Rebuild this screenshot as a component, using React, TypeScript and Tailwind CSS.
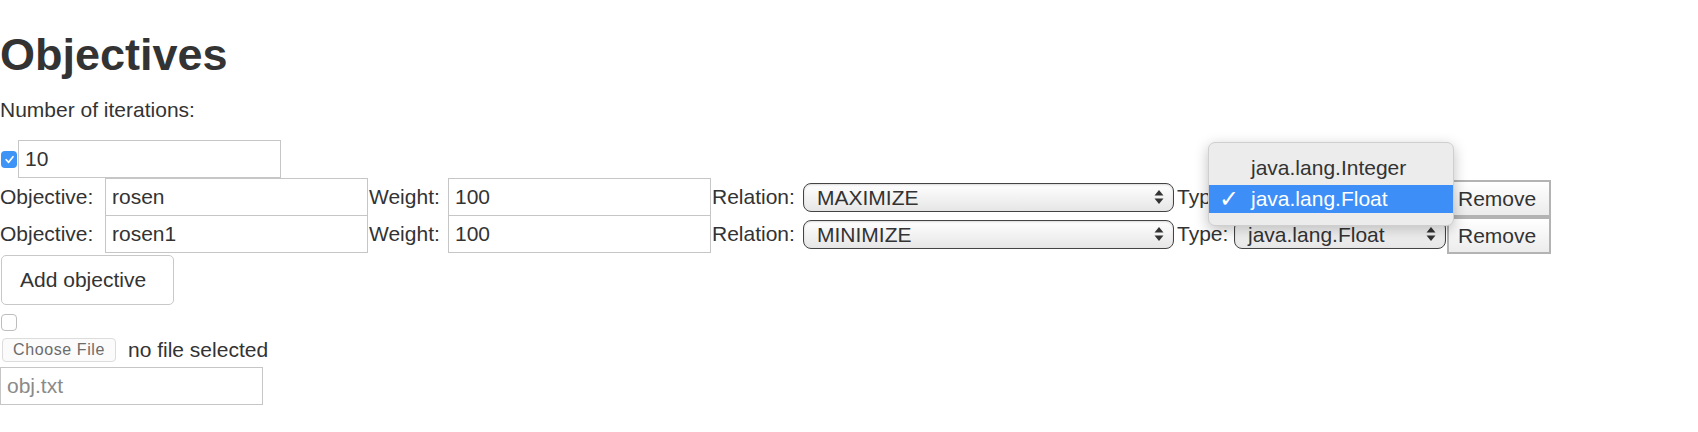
import React from 'react';

function Arrows() {
    return (
        <svg width="10" height="16" viewBox="0 0 10 16" className="shrink-0">
            <polygon points="5,1 9.5,6.5 0.5,6.5" fill="#333" />
            <polygon points="5,15 9.5,9.5 0.5,9.5" fill="#333" />
        </svg>
    );
}

function Select({ value, width }: { value: string; width: string }) {
    return (
        <div
            className={`flex h-[29px] ${width} items-center justify-between rounded-[8px] border-[1.5px] border-[#444] bg-gradient-to-b from-white to-[#e6e6e6] pl-[13px] pr-[9px] shadow-[inset_0_1px_2px_rgba(0,0,0,0.15)]`}
        >
            <span className="leading-none">{value}</span>
            <Arrows />
        </div>
    );
}

function TextInput({ value, width = 'w-[263px]', muted = false }: { value: string; width?: string; muted?: boolean }) {
    return (
        <div className={`flex h-[38px] ${width} shrink-0 items-center border border-[#c6c6c6] bg-white px-[6px] ${muted ? 'text-[#8a8a8a]' : ''}`}>
            {value}
        </div>
    );
}

function Checkbox({ checked }: { checked: boolean }) {
    return checked ? (
        <span className="flex h-[17px] w-[16px] items-center justify-center rounded-[4px] bg-[#3d94f6]">
            <svg width="11" height="11" viewBox="0 0 10 10">
                <polyline points="2,5.2 4.2,7.6 8.2,2.4" fill="none" stroke="white" strokeWidth="1.5" strokeLinecap="round" strokeLinejoin="round" />
            </svg>
        </span>
    ) : (
        <span className="block h-[17px] w-[16px] rounded-[4px] border border-[#bdbdbd] bg-white" />
    );
}

function ObjectiveRow({ name, relation, type }: { name: string; relation: string; type: string }) {
    return (
        <div className="-mt-px flex h-[38px] items-center first:mt-0">
            <span className="w-[105px] shrink-0">Objective:</span>
            <TextInput value={name} />
            <span className="w-[80px] shrink-0 pl-[1px]">Weight:</span>
            <TextInput value="100" />
            <span className="w-[92px] shrink-0 pl-[1px]">Relation:</span>
            <Select value={relation} width="w-[371px]" />
            <span className="w-[60px] shrink-0 pl-[3px]">Type:</span>
            <Select value={type} width="w-[212px]" />
            <button className="ml-px mt-[3px] h-[37px] w-[104px] shrink-0 border-2 border-[#b3b3b3] bg-gradient-to-b from-white to-[#ececec] pl-[9px] text-left">
                Remove
            </button>
        </div>
    );
}

export default function App() {
    return (
        <div className="relative min-h-[432px] bg-white text-[21px] leading-[24px] text-[#333] [font-family:'Liberation_Sans',Arial,sans-serif]">
            <h1 className="pt-[27px] text-[45px] font-bold leading-[56px]">Objectives</h1>
            <p className="mt-[15px]">Number of iterations:</p>

            <div className="mt-[18px] flex items-center">
                <span className="ml-[1px] mr-[1px] mt-[1px]">
                    <Checkbox checked />
                </span>
                <TextInput value="10" width="w-[263px]" />
            </div>

            <div className="flex flex-col">
                <ObjectiveRow name="rosen" relation="MAXIMIZE" type="java.lang.Float" />
                <ObjectiveRow name="rosen1" relation="MINIMIZE" type="java.lang.Float" />
            </div>

            <button className="ml-px mt-[2px] h-[50px] w-[173px] rounded-[5px] border-[1.5px] border-[#c8c8c8] bg-white text-left pl-[18px]">
                Add objective
            </button>

            <div className="ml-px mt-[9px]">
                <Checkbox checked={false} />
            </div>

            <div className="mt-[7px] flex items-center">
                <button className="ml-[2px] h-[24px] w-[114px] rounded-[4px] border border-[#dcdcdc] bg-[#fbfbfb] text-[16px] leading-none tracking-[0.6px] text-[#6b6b6b]">
                    Choose File
                </button>
                <span className="ml-[12px]">no file selected</span>
            </div>

            <div className="mt-[5px]">
                <TextInput value="obj.txt" muted />
            </div>

            {/* open native select menu */}
            <div className="absolute left-[1208px] top-[142px] h-[84px] w-[246px] rounded-[7px] border border-[#cfcfcf] bg-[#ececec] pt-[8px] shadow-[0_4px_14px_rgba(0,0,0,0.25)]">
                <div className="flex h-[34px] items-center pl-[42px]">java.lang.Integer</div>
                <div className="flex h-[28px] items-center bg-[#3d8ef7] text-white">
                    <span className="w-[42px] pl-[10px] text-[24px] leading-none">✓</span>
                    <span>java.lang.Float</span>
                </div>
            </div>
        </div>
    );
}
